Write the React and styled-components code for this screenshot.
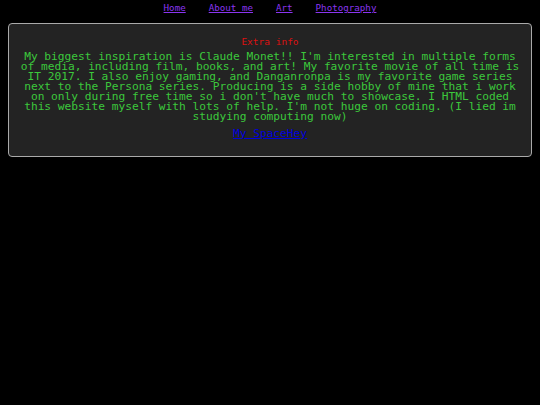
import React from 'react';
import styled, { createGlobalStyle } from 'styled-components';

const GlobalStyle = createGlobalStyle`
  html, body {
    margin: 0;
    padding: 0;
    background: #000;
  }
  body {
    font-family: "DejaVu Sans Mono", "Liberation Mono", monospace;
  }
`;

const Page = styled.div`
  padding: 0 8px;
`;

const Nav = styled.nav`
  display: flex;
  justify-content: center;
  gap: 23px;
  height: 16px;
  line-height: 16px;
  font-size: 9.2px;
`;

const NavLink = styled.a`
  color: #8a35f0;
  text-decoration: underline;
`;

const Panel = styled.section`
  margin-top: 7px;
  background: #232323;
  border: 1px solid #aaa;
  border-radius: 4px;
  padding: 12px 9px 15px;
  text-align: center;
`;

const Heading = styled.h3`
  margin: 0;
  font-size: 9.5px;
  line-height: 12px;
  font-weight: normal;
  color: #dd1111;
`;

const Blurb = styled.p`
  margin: 4px 0 0;
  font-size: 11.2px;
  line-height: 10px;
  color: #3cc83c;
`;

const ProfileLink = styled.a`
  display: inline-block;
  margin-top: 7px;
  font-size: 11.2px;
  line-height: 10px;
  color: #0000dd;
  text-decoration: underline;
`;

const links = ['Home', 'About me', 'Art', 'Photography'];

const App = () => (
  <Page>
    <GlobalStyle />
    <Nav>
      {links.map((l) => (
        <NavLink key={l} href="#">{l}</NavLink>
      ))}
    </Nav>
    <Panel>
      <Heading>Extra info</Heading>
      <Blurb>
        My biggest inspiration is Claude Monet!! I'm interested in multiple forms of media,
        including film, books, and art! My favorite movie of all time is IT 2017. I also enjoy
        gaming, and Danganronpa is my favorite game series next to the Persona series. Producing
        is a side hobby of mine that i work on only during free time so i don't have much to
        showcase. I HTML coded this website myself with lots of help. I'm not huge on coding. (I
        lied im studying computing now)
      </Blurb>
      <ProfileLink href="#">My SpaceHey</ProfileLink>
    </Panel>
  </Page>
);

export default App;
